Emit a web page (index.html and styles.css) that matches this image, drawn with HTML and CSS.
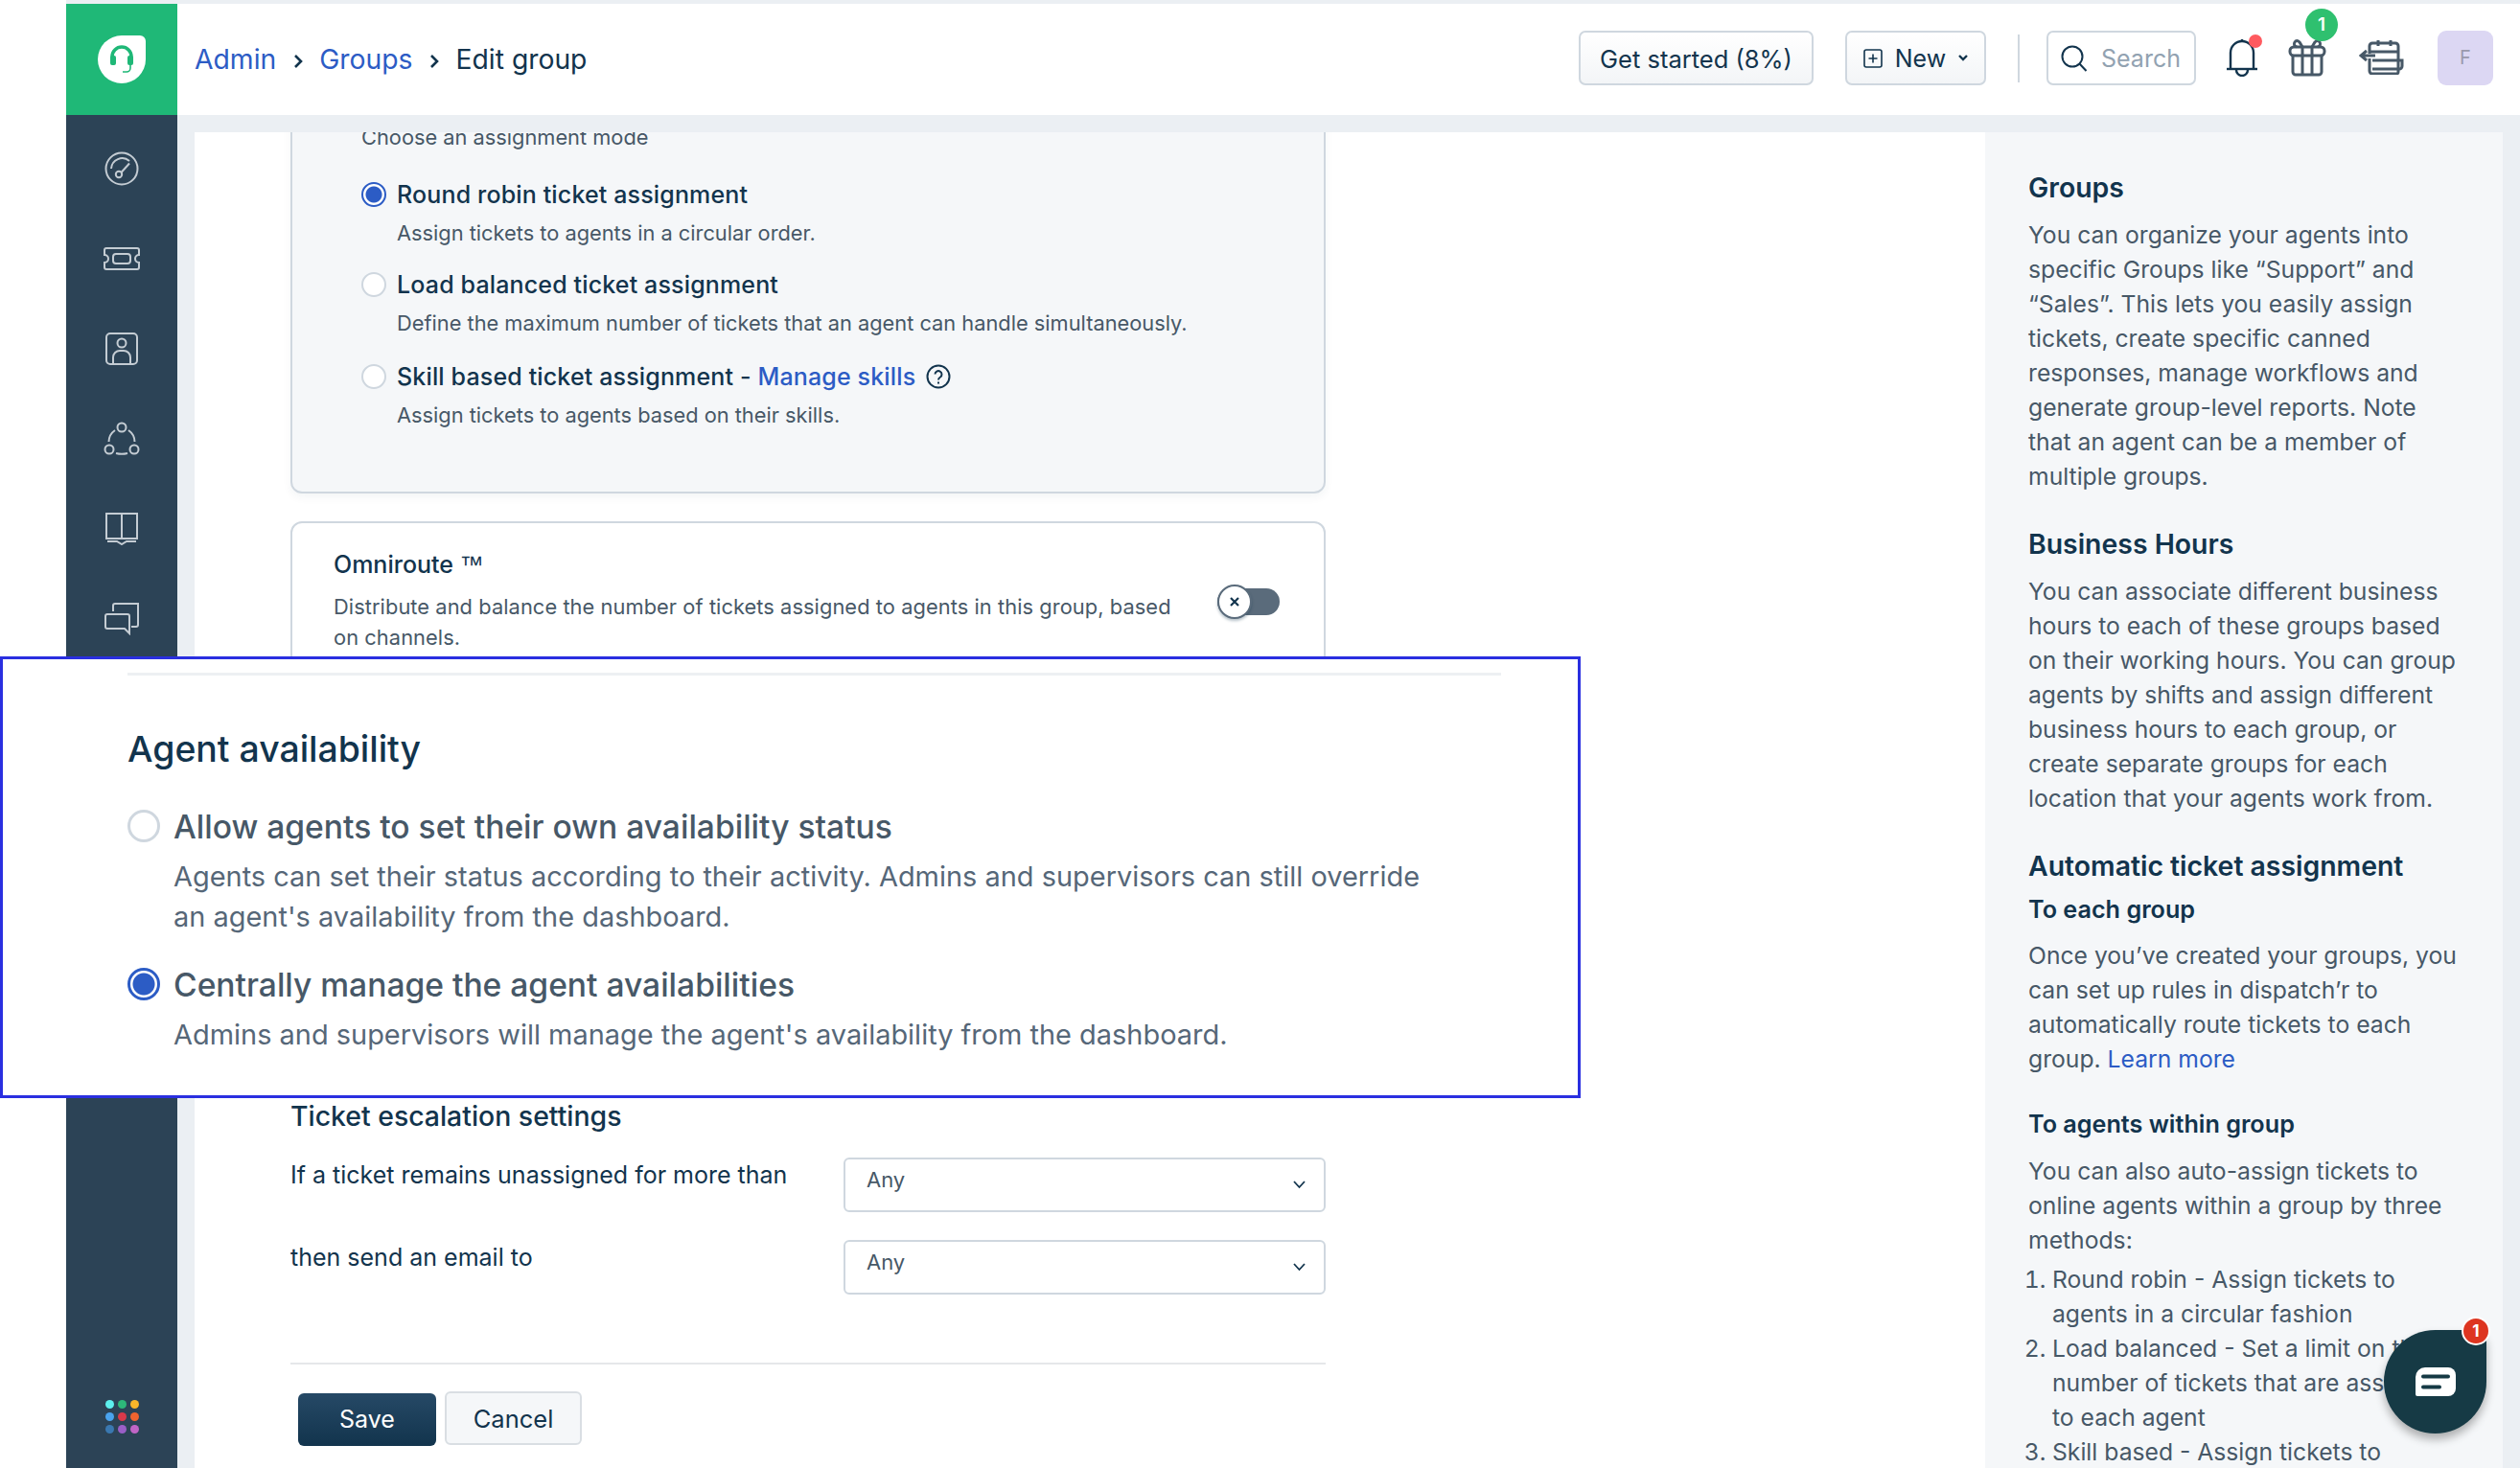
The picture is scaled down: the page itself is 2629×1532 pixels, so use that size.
FILE: index.html
```html
<!DOCTYPE html>
<html>
<head>
    <meta charset="utf-8">
    <title>Edit group</title>
    <link rel="stylesheet" href="styles.css">
</head>
<body>
    <div class="app">
        <div class="gutter"></div>

        <div class="sidebar">
            <div class="logo-block">
                <div class="logo">
                    <svg width="26" height="30" viewBox="0 0 26 30">
                        <path d="M3 14v-2a10 10 0 0 1 20 0v2" fill="none" stroke="#1fb877" stroke-width="3.500"/>
                        <rect x="1" y="11" width="6" height="10" rx="2" fill="#1fb877"/>
                        <rect x="19" y="11" width="6" height="10" rx="2" fill="#1fb877"/>
                        <path d="M22 21v3a4 4 0 0 1-4 4h-4" fill="none" stroke="#1fb877" stroke-width="1.600"/>
                    </svg>
                </div>
            </div>
            <div class="nav">
                <div class="nav-item">
                    <svg width="36" height="36" viewBox="0 0 36 36" fill="none" stroke="#c4ccd3" stroke-width="2">
                        <circle cx="18" cy="18" r="16.500"/>
                        <path d="M7 18a11.500 11.500 0 0 1 19-8"/>
                        <circle cx="15" cy="24" r="3.200"/>
                        <path d="M17.500 22L26 12.500"/>
                    </svg>
                </div>
                <div class="nav-item">
                    <svg width="38" height="24" viewBox="0 0 38 24" fill="none" stroke="#c4ccd3" stroke-width="2">
                        <path d="M3 1h32a2 2 0 0 1 2 2v5a4 4 0 0 0 0 8v5a2 2 0 0 1-2 2H3a2 2 0 0 1-2-2v-5a4 4 0 0 0 0-8V3a2 2 0 0 1 2-2z"/>
                        <rect x="10" y="7" width="18" height="10" rx="3"/>
                    </svg>
                </div>
                <div class="nav-item">
                    <svg width="34" height="34" viewBox="0 0 34 34" fill="none" stroke="#c4ccd3" stroke-width="2">
                        <rect x="1" y="1" width="32" height="32" rx="4"/>
                        <circle cx="17" cy="11" r="4.500"/>
                        <path d="M8 33v-7a7 7 0 0 1 7-7h4a7 7 0 0 1 7 7v7"/>
                    </svg>
                </div>
                <div class="nav-item">
                    <svg width="38" height="36" viewBox="0 0 38 36" fill="none" stroke="#c4ccd3" stroke-width="2">
                        <circle cx="19" cy="6" r="4.500"/>
                        <circle cx="6" cy="29" r="4.500"/>
                        <circle cx="32" cy="29" r="4.500"/>
                        <path d="M12 9a15 15 0 0 0-6.500 12M26 9a15 15 0 0 1 6.500 12M13 33a22 22 0 0 0 12 0"/>
                    </svg>
                </div>
                <div class="nav-item">
                    <svg width="34" height="34" viewBox="0 0 34 34" fill="none" stroke="#c4ccd3" stroke-width="2">
                        <path d="M1 1h16v26H1zM17 1h16v26H17z"/>
                        <path d="M2 30h10l5 3 5-3h10"/>
                    </svg>
                </div>
                <div class="nav-item">
                    <svg width="36" height="34" viewBox="0 0 36 34" fill="none" stroke="#c4ccd3" stroke-width="2">
                        <path d="M9 9V3a2 2 0 0 1 2-2h24v22a2 2 0 0 1-2 2h-5"/>
                        <path d="M3 12h21a2 2 0 0 1 2 2v18l-5-5H3a2 2 0 0 1-2-2V14a2 2 0 0 1 2-2z"/>
                    </svg>
                </div>
            </div>
            <div class="dots">
                <span class="dot dot-cyan"></span><span class="dot dot-green"></span><span class="dot dot-yellow"></span>
                <span class="dot dot-blue"></span><span class="dot dot-red"></span><span class="dot dot-orange"></span>
                <span class="dot dot-navy"></span><span class="dot dot-purple"></span><span class="dot dot-pink"></span>
            </div>
        </div>

        <div class="main">
            <div class="header">
                <div class="crumbs">
                    <a class="link">Admin</a>
                    <svg class="crumb-sep" width="10" height="16" viewBox="0 0 10 16" fill="none" stroke="#12344d" stroke-width="2.600"><path d="M2 2l6 6-6 6"/></svg>
                    <a class="link">Groups</a>
                    <svg class="crumb-sep" width="10" height="16" viewBox="0 0 10 16" fill="none" stroke="#12344d" stroke-width="2.600"><path d="M2 2l6 6-6 6"/></svg>
                    <span>Edit group</span>
                </div>
                <div class="tools">
                    <div class="btn btn-started">Get started (8%)</div>
                    <div class="btn btn-new">
                        <svg width="20" height="20" viewBox="0 0 20 20" fill="none" stroke="#12344d" stroke-width="1.600">
                            <rect x="1" y="1" width="18" height="18" rx="2"/>
                            <path d="M10 5.500v9M5.500 10h9"/>
                        </svg>
                        <span>New</span>
                        <svg width="10" height="7" viewBox="0 0 10 7" fill="none" stroke="#12344d" stroke-width="2.400"><path d="M1 1l4 4 4-4"/></svg>
                    </div>
                    <div class="tool-divider"></div>
                    <div class="search">
                        <svg width="28" height="28" viewBox="0 0 28 28" fill="none" stroke="#12344d" stroke-width="2">
                            <circle cx="12" cy="12" r="10.500"/>
                            <path d="M19.500 19.500l7 7.500"/>
                        </svg>
                        <span>Search</span>
                    </div>
                    <div class="tool-icon bell">
                        <svg width="34" height="40" viewBox="0 0 34 40" fill="none" stroke="#12344d" stroke-width="2.400">
                            <path d="M5 31V15a12 12 0 0 1 24 0v16"/>
                            <path d="M17 3V1"/>
                            <path d="M1 32h32"/>
                            <path d="M11 33a6 6 0 0 0 12 0"/>
                        </svg>
                        <span class="red-dot"></span>
                    </div>
                    <div class="tool-icon gift">
                        <svg width="40" height="40" viewBox="0 0 40 40" fill="none" stroke="#475867" stroke-width="3">
                            <rect x="2" y="9" width="36" height="9" rx="4"/>
                            <path d="M5 18v17a3 3 0 0 0 3 3h24a3 3 0 0 0 3-3V18"/>
                            <path d="M15 9v29M25 9v29"/>
                            <path d="M15 9l-3-5q-3-3-5 0t2 5M25 9l3-5q3-3 5 0t-2 5"/>
                        </svg>
                        <span class="green-badge">1</span>
                    </div>
                    <div class="tool-icon calendar">
                        <svg width="47" height="36" viewBox="0 0 47 36" fill="none" stroke="#475867" stroke-width="3">
                            <path d="M11 14V6a3 3 0 0 1 3-3h24a3 3 0 0 1 3 3v27a2 2 0 0 1-2 2H14a3 3 0 0 1-3-3V19"/>
                            <path d="M11 12h30M20 0v6M33 0v6"/>
                            <path d="M14 21h31v6a3 3 0 0 1-3 3H14"/>
                            <path d="M17 16H3M8 11l-6 5 6 5"/>
                        </svg>
                    </div>
                    <div class="avatar">F</div>
                </div>
            </div>

            <div class="content">
                <div class="form-area">
                    <div class="card card-assign">
                        <div class="desc">Choose an assignment mode</div>

                        <div class="mode mode-first">
                            <span class="radio radio-on"></span>
                            <span class="mode-label">Round robin ticket assignment</span>
                        </div>
                        <div class="desc mode-desc">Assign tickets to agents in a circular order.</div>

                        <div class="mode mode-second">
                            <span class="radio"></span>
                            <span class="mode-label">Load balanced ticket assignment</span>
                        </div>
                        <div class="desc mode-desc">Define the maximum number of tickets that an agent can handle simultaneously.</div>

                        <div class="mode mode-third">
                            <span class="radio"></span>
                            <span class="mode-label">Skill based ticket assignment - <a class="link">Manage skills</a></span>
                            <svg class="help" width="26" height="26" viewBox="0 0 26 26" fill="none" stroke="#12344d" stroke-width="2">
                                <circle cx="13" cy="13" r="11.500"/>
                                <path d="M9.500 10.500a3.500 3.500 0 1 1 5.500 3c-1.300.8-2 1.300-2 3"/>
                                <path d="M13 18.500v2"/>
                            </svg>
                        </div>
                        <div class="desc mode-desc">Assign tickets to agents based on their skills.</div>
                    </div>

                    <div class="card card-omni">
                        <div class="omni-text">
                            <div class="omni-title">Omniroute <span class="omni-tm">™</span></div>
                            <div class="desc omni-desc">Distribute and balance the number of tickets assigned to agents in this group, based on channels.</div>
                        </div>
                        <div class="toggle">
                            <span class="toggle-knob">
                                <svg width="12" height="12" viewBox="0 0 12 12" fill="none" stroke="#12344d" stroke-width="2.200"><path d="M2 2l8 8M10 2l-8 8"/></svg>
                            </span>
                        </div>
                    </div>

                    <h3 class="section-title">Ticket escalation settings</h3>
                    <div class="esc-grid">
                        <div class="esc-label">If a ticket remains unassigned for more than</div>
                        <div class="select">
                            <span>Any</span>
                            <svg width="15" height="9" viewBox="0 0 15 9" fill="none" stroke="#12344d" stroke-width="1.800"><path d="M2 1l5.500 6L13 1"/></svg>
                        </div>
                        <div class="esc-label">then send an email to</div>
                        <div class="select">
                            <span>Any</span>
                            <svg width="15" height="9" viewBox="0 0 15 9" fill="none" stroke="#12344d" stroke-width="1.800"><path d="M2 1l5.500 6L13 1"/></svg>
                        </div>
                    </div>
                    <div class="form-rule"></div>
                    <div class="form-actions">
                        <div class="btn-save">Save</div>
                        <div class="btn-cancel">Cancel</div>
                    </div>
                </div>

                <div class="help-panel">
                    <h4 class="help-h1">Groups</h4>
                    <p>You can organize your agents into specific Groups like “Support” and “Sales”. This lets you easily assign tickets, create specific canned responses, manage workflows and generate group-level reports. Note that an agent can be a member of multiple groups.</p>
                    <h4 class="help-h1 help-next">Business Hours</h4>
                    <p>You can associate different business hours to each of these groups based on their working hours. You can group agents by shifts and assign different business hours to each group, or create separate groups for each location that your agents work from.</p>
                    <h4 class="help-h1 help-next">Automatic ticket assignment</h4>
                    <h5 class="help-h2">To each group</h5>
                    <p class="help-tight">Once you’ve created your groups, you can set up rules in dispatch’r to automatically route tickets to each group. <a class="link">Learn more</a></p>
                    <h5 class="help-h2 help-h2-next">To agents within group</h5>
                    <p>You can also auto-assign tickets to online agents within a group by three methods:</p>
                    <ol>
                        <li>Round robin - Assign tickets to agents in a circular fashion</li>
                        <li>Load balanced - Set a limit on the number of tickets that are assigned to each agent</li>
                        <li>Skill based - Assign tickets to agents based on their skills</li>
                    </ol>
                </div>
            </div>
        </div>
    </div>

    <!-- highlighted crop laid over the page -->
    <div class="highlight">
        <div class="highlight-rule"></div>
        <h2 class="highlight-title">Agent availability</h2>
        <div class="avail avail-first">
            <span class="radio radio-big"></span>
            <span>Allow agents to set their own availability status</span>
        </div>
        <div class="avail-desc">Agents can set their status according to their activity. Admins and supervisors can still override an agent's availability from the dashboard.</div>
        <div class="avail avail-second">
            <span class="radio radio-big radio-on"></span>
            <span>Centrally manage the agent availabilities</span>
        </div>
        <div class="avail-desc">Admins and supervisors will manage the agent's availability from the dashboard.</div>
    </div>

    <div class="chat-widget">
        <svg width="42" height="30" viewBox="0 0 42 30">
            <path d="M10 0h24a8 8 0 0 1 8 8v14a8 8 0 0 1-8 8H2a2 2 0 0 1-2-2V10A10 10 0 0 1 10 0z" fill="#fff"/>
            <path d="M8 9.500h26M8 20.500h17" stroke="#163a45" stroke-width="4" stroke-linecap="round"/>
        </svg>
        <span class="chat-badge">1</span>
    </div>
</body>
</html>
```

FILE: styles.css
```css
* {
    box-sizing: border-box;
}

html, body {
    margin: 0;
    padding: 0;
}

body {
    position: relative;
    width: 2629px;
    height: 1532px;
    overflow: hidden;
    font-family: "Inter", "Noto Sans", sans-serif;
    color: #12344d;
    background: #ebeff3;
}

.app {
    display: flex;
    height: 1532px;
}

.gutter {
    width: 69px;
    background: white;
}

.link {
    color: #2c5cc5;
}

/* sidebar */
.sidebar {
    display: flex;
    flex-direction: column;
    width: 116px;
    margin-top: 4px;
    background: #2c4356;
}

.logo-block {
    display: flex;
    align-items: center;
    justify-content: center;
    height: 116px;
    background: #1fb877;
}

.logo {
    display: flex;
    align-items: center;
    justify-content: center;
    width: 50px;
    height: 50px;
    background: white;
    border-radius: 50% 6px 50% 50%;
}

.nav {
    padding-top: 9px;
}

.nav-item {
    display: flex;
    align-items: center;
    justify-content: center;
    height: 94px;
}

.dots {
    display: grid;
    grid-template-columns: repeat(3, 9px);
    gap: 4px;
    justify-content: center;
    margin-top: auto;
    padding-bottom: 36px;
}

.dot {
    height: 9px;
    border-radius: 50%;
}

.dot-cyan { background: #5df0ee; }
.dot-green { background: #2db77a; }
.dot-yellow { background: #f8b62a; }
.dot-blue { background: #4aa3ee; }
.dot-red { background: #d8394a; }
.dot-orange { background: #f0642f; }
.dot-navy { background: #3a78b0; }
.dot-purple { background: #9a5fc7; }
.dot-pink { background: #c065c5; }

/* header */
.main {
    flex: 1;
    display: flex;
    flex-direction: column;
    min-width: 0;
}

.header {
    display: flex;
    justify-content: space-between;
    height: 116px;
    margin-top: 4px;
    padding: 0 28px 0 18px;
    background: white;
}

.crumbs {
    display: flex;
    align-items: center;
    font-size: 28.300px;
    line-height: 116px;
}

.crumb-sep {
    margin: 4px 17px 0 18px;
}

.tools {
    display: flex;
    align-items: flex-start;
    padding-top: 28px;
}

.btn {
    display: flex;
    align-items: center;
    justify-content: center;
    height: 57px;
    font-size: 25px;
    background: linear-gradient(#fff, #f3f5f7);
    border: 2px solid #cfd7df;
    border-radius: 7px;
}

.btn-started {
    width: 245px;
    font-size: 25.500px;
    padding-top: 1px;
}

.btn-new {
    width: 147px;
    margin-left: 33px;
    gap: 13px;
}

.tool-divider {
    width: 2px;
    height: 50px;
    margin: 4px 28px 0 33px;
    background: #cfd7df;
}

.search {
    display: flex;
    align-items: center;
    gap: 14px;
    width: 156px;
    height: 57px;
    padding-left: 13px;
    font-size: 25px;
    color: #92a2b1;
    border: 2px solid #cfd7df;
    border-radius: 7px;
}

.tool-icon {
    position: relative;
    display: flex;
}

.bell {
    margin: 8px 0 0 31px;
}

.red-dot {
    position: absolute;
    top: -4px;
    right: -4px;
    width: 14px;
    height: 14px;
    background: #ff5a5f;
    border-radius: 50%;
}

.gift {
    margin: 8px 0 0 31px;
}

.green-badge {
    position: absolute;
    top: -31px;
    left: 18px;
    width: 34px;
    height: 34px;
    font-size: 19px;
    font-weight: 600;
    line-height: 34px;
    text-align: center;
    color: white;
    background: #2fc06f;
    border-radius: 50%;
}

.calendar {
    margin: 10px 0 0 34px;
}

.avatar {
    width: 58px;
    height: 57px;
    margin-left: 35px;
    font-size: 20px;
    line-height: 57px;
    text-align: center;
    color: #9a99ad;
    background: #dcd7f3;
    border-radius: 9px;
}

/* form */
.content {
    flex: 1;
    display: flex;
    min-height: 0;
    padding: 18px 18px 0 18px;
}

.form-area {
    width: 1868px;
    padding-left: 100px;
    overflow: hidden;
    background: white;
}

.card {
    width: 1080px;
    border: 2px solid #cfd7df;
    border-radius: 12px;
}

.card-assign {
    margin-top: -40px;
    padding: 27px 0 64px 72px;
    background: #f5f7f9;
    box-shadow: 0 4px 10px rgba(18, 52, 77, 0.05);
}

.desc {
    font-size: 21.800px;
    line-height: 32px;
    color: #475867;
}

.mode {
    display: flex;
    align-items: center;
    height: 32px;
    font-size: 25px;
    font-weight: 500;
    letter-spacing: 0.15px;
}

.mode-first { margin-top: 28px; }
.mode-second { margin-top: 22px; }
.mode-third { margin-top: 24px; }

.mode-label {
    margin-left: 11px;
}

.mode-desc {
    margin-top: 8px;
    margin-left: 37px;
}

.help {
    margin-left: 11px;
}

.radio {
    flex: none;
    width: 26px;
    height: 26px;
    background: white;
    border: 2px solid #cfd7df;
    border-radius: 50%;
}

.radio-on {
    border-color: #2c5cc5;
    background: radial-gradient(circle, #2c5cc5 0 8px, white 9px);
}

.card-omni {
    display: flex;
    justify-content: space-between;
    height: 176px;
    margin-top: 29px;
    padding: 27px 46px 0 43px;
    background: white;
}

.omni-text {
    width: 885px;
}

.omni-title {
    font-size: 25px;
    font-weight: 500;
    line-height: 32px;
}

.omni-tm {
    font-family: "Liberation Sans", sans-serif;
}

.omni-desc {
    margin-top: 12px;
    letter-spacing: 0.08px;
}

.toggle {
    display: flex;
    align-items: center;
    width: 65px;
    height: 28px;
    margin-top: 41px;
    background: #5a6b7b;
    border-radius: 14px;
}

.toggle-knob {
    display: flex;
    align-items: center;
    justify-content: center;
    width: 36px;
    height: 36px;
    background: white;
    border: 2px solid #5a6b7b;
    border-radius: 50%;
    box-shadow: 0 2px 3px rgba(18, 52, 77, 0.3);
}

.section-title {
    margin: 428px 0 0 0;
    font-size: 28.400px;
    font-weight: 500;
    line-height: 34px;
}

.esc-grid {
    display: grid;
    grid-template-columns: 577px 503px;
    row-gap: 29px;
    margin-top: 26px;
}

.esc-label {
    margin-top: 2px;
    font-size: 25px;
    line-height: 32px;
}

.select {
    display: flex;
    align-items: center;
    justify-content: space-between;
    height: 57px;
    padding: 0 18px 0 22px;
    font-size: 22px;
    color: #475867;
    border: 2px solid #cfd7df;
    border-radius: 6px;
}

.select span {
    align-self: flex-start;
    margin-top: 6px;
    line-height: 30px;
}

.form-rule {
    width: 1080px;
    height: 2px;
    margin-top: 71px;
    background: #e5e7ea;
}

.form-actions {
    display: flex;
    align-items: flex-start;
    gap: 9px;
    margin-top: 28px;
    padding-left: 8px;
    font-size: 25px;
}

.btn-save {
    width: 144px;
    height: 55px;
    margin-top: 2px;
    line-height: 55px;
    text-align: center;
    color: white;
    background: linear-gradient(#264966, #12344d);
    border-radius: 6px;
}

.btn-cancel {
    width: 143px;
    height: 56px;
    font-size: 25.500px;
    line-height: 54px;
    text-align: center;
    background: #f5f7f9;
    border: 2px solid #d9dee3;
    border-radius: 6px;
}

/* help panel */
.help-panel {
    flex: 1;
    padding: 40px 44px 0 45px;
    overflow: hidden;
    background: #f5f7f9;
    font-size: 24.700px;
    line-height: 36px;
    color: #475867;
}

.help-panel h4,
.help-panel h5,
.help-panel p,
.help-panel ol {
    margin: 0;
}

.help-panel p {
    margin-top: 13px;
}

.help-panel .help-tight {
    margin-top: 12px;
}

.help-h1 {
    font-size: 28.400px;
    font-weight: 600;
    color: #12344d;
}

.help-panel .help-next {
    margin-top: 35px;
}

.help-panel .help-h2 {
    margin-top: 9px;
    font-size: 25.200px;
    font-weight: 600;
    color: #12344d;
}

.help-panel .help-h2-next {
    margin-top: 32px;
}

.help-panel ol {
    margin-top: 5px;
    padding-left: 25px;
}

/* highlight crop */
.highlight {
    position: absolute;
    top: 685px;
    left: 0;
    width: 1649px;
    height: 461px;
    padding: 14px 0 0 130px;
    background: white;
    border: 3px solid #2a2fe0;
}

.highlight-rule {
    width: 1433px;
    height: 3px;
    background: #edf0f3;
}

.highlight-title {
    margin: 54px 0 0 0;
    font-size: 37.400px;
    font-weight: 500;
    line-height: 46px;
}

.avail {
    display: flex;
    align-items: center;
    gap: 14px;
    height: 44px;
    font-size: 33.600px;
    font-weight: 500;
    color: #475867;
}

.avail-first { margin-top: 35px; }
.avail-second { margin-top: 27px; }

.avail-desc {
    width: 1320px;
    margin: 10px 0 0 48px;
    font-size: 28.950px;
    line-height: 42px;
    color: #566778;
}

.radio-big {
    width: 34px;
    height: 34px;
    border-width: 3px;
}

.radio-big.radio-on {
    background: radial-gradient(circle, #2c5cc5 0 11px, white 12px);
}

/* chat launcher */
.chat-widget {
    position: absolute;
    left: 2487px;
    top: 1388px;
    display: flex;
    align-items: center;
    justify-content: center;
    width: 107px;
    height: 108px;
    background: #163a45;
    border-radius: 50% 12px 50% 50%;
    box-shadow: 0 6px 10px rgba(0, 0, 0, 0.3);
}

.chat-badge {
    position: absolute;
    top: -14px;
    right: -4px;
    width: 30px;
    height: 30px;
    font-size: 17px;
    font-weight: 700;
    line-height: 26px;
    text-align: center;
    color: white;
    background: #dd3520;
    border: 2px solid white;
    border-radius: 50%;
}
```
